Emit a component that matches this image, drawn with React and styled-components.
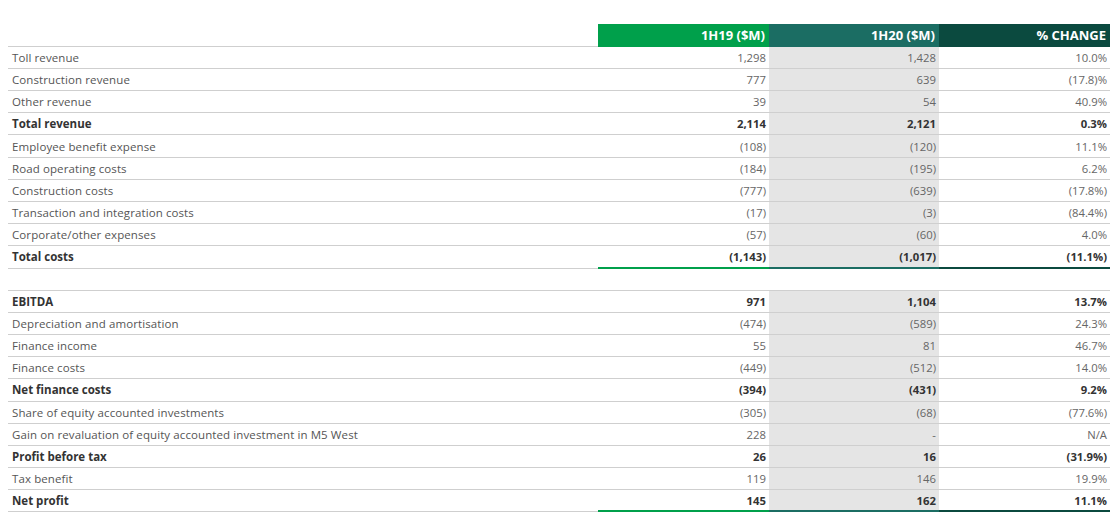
import React from "react";
import styled, { createGlobalStyle } from "styled-components";

const GlobalStyle = createGlobalStyle`
  body {
    margin: 0;
    background: #ffffff;
    font-family: "Open Sans", "Liberation Sans", sans-serif;
  }
`;

const colours = ["#00a04b", "#1b6d63", "#0b4a3f"];

const Page = styled.div`
  padding: 24px 8px 0 8px;
  width: 1102px;
`;

const Row = styled.div`
  display: grid;
  grid-template-columns: 590px 171px 170px 171px;
  height: ${(p) => (p.header ? "22.7px" : "22.2px")};
`;

const Label = styled.div`
  display: flex;
  align-items: center;
  padding-left: 4px;
  font-size: 11.5px;
  letter-spacing: ${(p) => (p.bold ? "0" : "0.1px")};
  color: ${(p) => (p.bold ? "#333" : "#555")};
  font-weight: ${(p) => (p.bold ? 700 : 400)};
  border-bottom: 1px solid #cfcfcf;
  box-sizing: border-box;
  white-space: nowrap;
`;

const Cell = styled.div`
  display: flex;
  align-items: center;
  justify-content: flex-end;
  padding-right: 3px;
  font-size: 11.3px;
  color: ${(p) => (p.bold ? "#333" : "#666")};
  font-weight: ${(p) => (p.bold ? 700 : 400)};
  background: ${(p) => (p.shade ? "#e5e5e5" : "transparent")};
  border-bottom: ${(p) => (p.accent ? `2px solid ${p.accent}` : "1px solid #cfcfcf")};
  box-sizing: border-box;
`;

const HeadCell = styled.div`
  display: flex;
  align-items: center;
  justify-content: flex-end;
  padding-right: 4px;
  font-size: 13px;
  font-weight: 700;
  color: #ffffff;
  background: ${(p) => p.bg};
`;

const Spacer = styled.div`
  height: 22px;
  border-bottom: 1px solid #cfcfcf;
  box-sizing: border-box;
`;

const top = [
  ["Toll revenue", "1,298", "1,428", "10.0%"],
  ["Construction revenue", "777", "639", "(17.8)%"],
  ["Other revenue", "39", "54", "40.9%"],
  ["Total revenue", "2,114", "2,121", "0.3%", true],
  ["Employee benefit expense", "(108)", "(120)", "11.1%"],
  ["Road operating costs", "(184)", "(195)", "6.2%"],
  ["Construction costs", "(777)", "(639)", "(17.8%)"],
  ["Transaction and integration costs", "(17)", "(3)", "(84.4%)"],
  ["Corporate/other expenses", "(57)", "(60)", "4.0%"],
  ["Total costs", "(1,143)", "(1,017)", "(11.1%)", true, true],
];

const bottom = [
  ["EBITDA", "971", "1,104", "13.7%", true],
  ["Depreciation and amortisation", "(474)", "(589)", "24.3%"],
  ["Finance income", "55", "81", "46.7%"],
  ["Finance costs", "(449)", "(512)", "14.0%"],
  ["Net finance costs", "(394)", "(431)", "9.2%", true],
  ["Share of equity accounted investments", "(305)", "(68)", "(77.6%)"],
  ["Gain on revaluation of equity accounted investment in M5 West", "228", "-", "N/A"],
  ["Profit before tax", "26", "16", "(31.9%)", true],
  ["Tax benefit", "119", "146", "19.9%"],
  ["Net profit", "145", "162", "11.1%", true, true],
];

function DataRow({ line }) {
  const [label, a, b, c, bold, total] = line;
  return (
    <Row>
      <Label bold={bold}>{label}</Label>
      {[a, b, c].map((v, i) => (
        <Cell key={i} bold={bold} shade={i === 1} accent={total ? colours[i] : null}>
          {v}
        </Cell>
      ))}
    </Row>
  );
}

export default function App() {
  return (
    <>
      <GlobalStyle />
      <Page>
        <Row header>
          <Label />
          <HeadCell bg={colours[0]}>1H19 ($M)</HeadCell>
          <HeadCell bg={colours[1]}>1H20 ($M)</HeadCell>
          <HeadCell bg={colours[2]}>% CHANGE</HeadCell>
        </Row>
        {top.map((l) => (
          <DataRow key={l[0]} line={l} />
        ))}
        <Spacer />
        {bottom.map((l) => (
          <DataRow key={l[0]} line={l} />
        ))}
      </Page>
    </>
  );
}
